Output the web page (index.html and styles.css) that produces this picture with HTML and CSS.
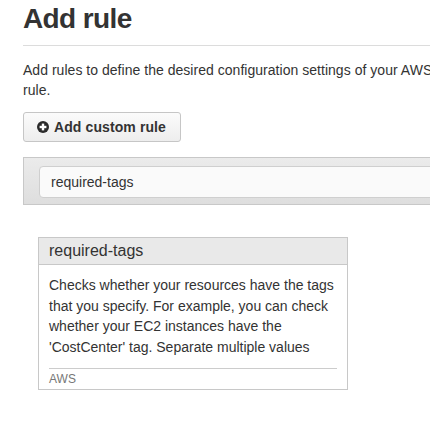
FILE: index.html
```html
<!DOCTYPE html>
<html>
<head>
<meta charset="utf-8">
<link rel="stylesheet" href="styles.css">
</head>
<body>
<div class="page">
  <h1 class="title">Add rule</h1>
  <p class="intro">Add rules to define the desired configuration settings of your AWS resources. You can customize a managed rule or create a custom<br>rule.</p>
  <button class="btn" type="button">
    <svg class="btn-icon" width="12" height="12" viewBox="0 0 12 12"><circle cx="6" cy="6" r="6" fill="#2b2b2b"/><rect x="2.6" y="4.8" width="6.8" height="2.4" fill="#fff"/><rect x="4.8" y="2.6" width="2.4" height="6.8" fill="#fff"/></svg>
    <span>Add custom rule</span>
  </button>
  <div class="search-panel">
    <div class="search-input">required-tags</div>
  </div>
  <div class="card">
    <div class="card-head">required-tags</div>
    <div class="card-body">
      <p class="card-text">Checks whether your resources have the tags that you specify. For example, you can check whether your EC2 instances have the 'CostCenter' tag. Separate multiple values</p>
      <div class="card-foot">AWS</div>
    </div>
  </div>
</div>
</body>
</html>
```
FILE: styles.css
```css
html, body {
  margin: 0;
  padding: 0;
  overflow: hidden;
  background: #fff;
}
body {
  font-family: "Liberation Sans", Arial, sans-serif;
  color: #333;
}
.page {
  width: 900px;
  padding-left: 23px;
}
.title {
  margin: 3px 0 0 0;
  font-size: 28px;
  line-height: 31px;
  font-weight: 700;
  letter-spacing: -0.6px;
  color: #333;
  padding-bottom: 11px;
  border-bottom: 1px solid #dcdcdc;
}
.intro {
  margin: 14px 0 0 0;
  font-size: 14px;
  line-height: 20px;
  letter-spacing: 0.03px;
  white-space: nowrap;
}
.btn {
  margin-top: 12px;
  display: flex;
  align-items: center;
  gap: 5px;
  height: 30px;
  padding: 0 14px 0 13px;
  border: 1px solid #c6c6c6;
  border-radius: 3px;
  background: linear-gradient(#fbfbfb, #ededed);
  font-family: "Liberation Sans", Arial, sans-serif;
  font-size: 14px;
  font-weight: 700;
  letter-spacing: 0.1px;
  color: #333;
}
.btn-icon {
  display: block;
}
.search-panel {
  margin-top: 15px;
  border: 1px solid #c8c8c8;
  background: linear-gradient(#ebebeb, #dedede);
  padding: 8px 0 6px 15px;
}
.search-input {
  height: 30px;
  line-height: 30px;
  border: 1px solid #cfcfcf;
  border-radius: 4px;
  background: #fafafa;
  padding-left: 11px;
  font-size: 14px;
  color: #333;
}
.card {
  margin: 32px 0 0 15px;
  width: 308px;
  border: 1px solid #c8c8c8;
}
.card-head {
  height: 26px;
  line-height: 26px;
  background: #e9e9e9;
  border-bottom: 1px solid #c8c8c8;
  padding-left: 10px;
  font-size: 16px;
}
.card-body {
  padding: 10px 10px 0 10px;
}
.card-text {
  margin: 0;
  font-size: 14px;
  line-height: 20.7px;
}
.card-foot {
  margin-top: 10px;
  border-top: 1px solid #ccc;
  padding: 2px 0 2px 0;
  font-size: 12px;
  line-height: 16px;
  color: #777;
}
```
